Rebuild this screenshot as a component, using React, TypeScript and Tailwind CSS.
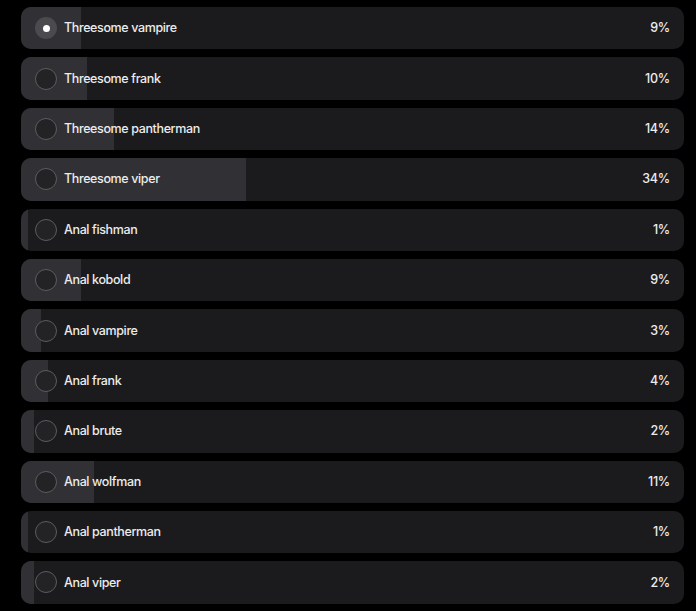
const options = [
  { label: 'Threesome vampire', pct: 9 },
  { label: 'Threesome frank', pct: 10 },
  { label: 'Threesome pantherman', pct: 14 },
  { label: 'Threesome viper', pct: 34 },
  { label: 'Anal fishman', pct: 1 },
  { label: 'Anal kobold', pct: 9 },
  { label: 'Anal vampire', pct: 3 },
  { label: 'Anal frank', pct: 4 },
  { label: 'Anal brute', pct: 2 },
  { label: 'Anal wolfman', pct: 11 },
  { label: 'Anal pantherman', pct: 1 },
  { label: 'Anal viper', pct: 2 },
]

export default function App() {
  const selected = 0

  return (
    <div className="min-h-[611px] w-[696px] bg-black pt-[7px] pl-[21px] pr-[12px] font-['Inter',sans-serif]">
      <div className="flex flex-col gap-[8px]">
        {options.map((o, i) => (
          <div
            key={o.label}
            className="relative flex h-[42.4px] items-center overflow-hidden rounded-[10px] bg-[#1b1b1e] pl-[14px] pr-[14px]"
          >
            <div
              className="absolute inset-y-0 left-0 bg-[#313135]"
              style={{ width: `${o.pct}%` }}
            />
            {i === selected ? (
              <span className="relative flex h-[22px] w-[22px] shrink-0 items-center justify-center rounded-full bg-[#4a4a4f]">
                <span className="h-[7px] w-[7px] rounded-full bg-white" />
              </span>
            ) : (
              <span className="relative h-[22px] w-[22px] shrink-0 rounded-full border-[1.5px] border-[#5c5c61] bg-[#232326]" />
            )}
            <span className="relative ml-[7px] pt-[1px] text-[12.5px] font-medium tracking-[-0.03em] text-[#ececec]">
              {o.label}
            </span>
            <span className="relative ml-auto pt-[1px] text-[12.5px] font-medium tracking-[-0.02em] text-[#ececec]">
              {o.pct}%
            </span>
          </div>
        ))}
      </div>
    </div>
  )
}
